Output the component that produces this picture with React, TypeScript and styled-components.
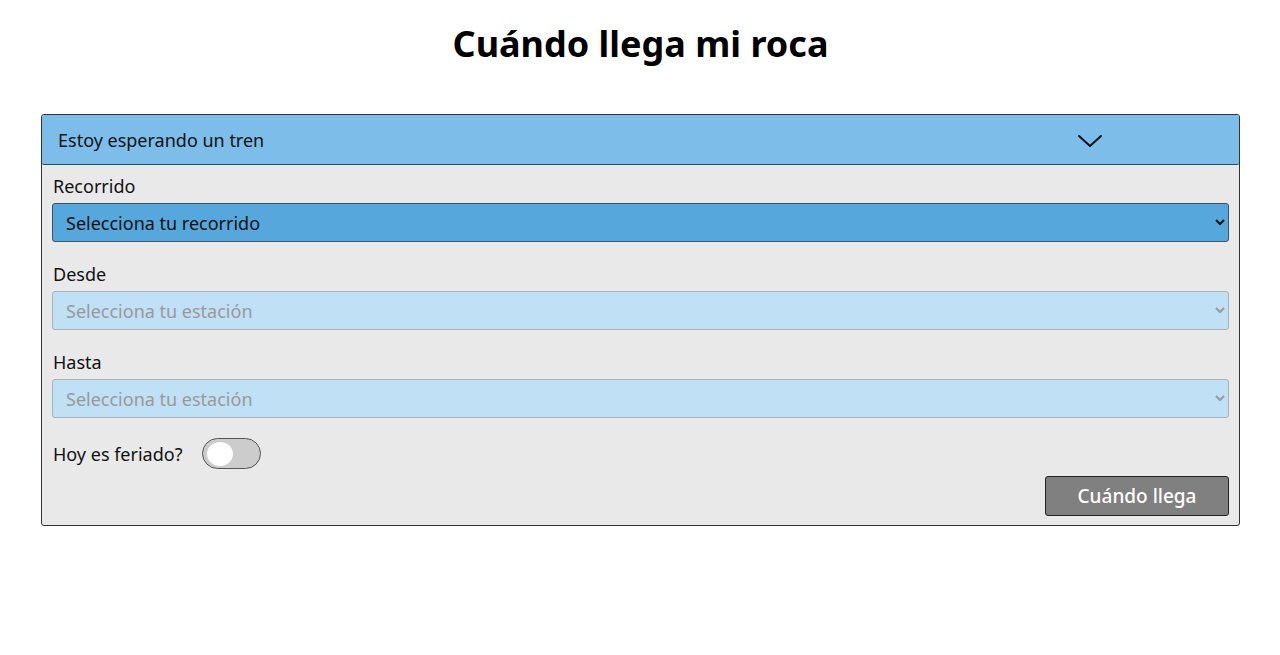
import { useState } from "react";
import styled, { createGlobalStyle } from "styled-components";

const GlobalStyle = createGlobalStyle`
  *, *::before, *::after { box-sizing: border-box; }
  body {
    margin: 0;
    background: #fff;
    color: #111;
    font-family: "Noto Sans", sans-serif;
    font-size: 18px;
    line-height: 24px;
  }
`;

const Page = styled.main`
  padding: 20px 40px 40px 41px;
`;

const Title = styled.h1`
  margin: 0 0 46px;
  color: #000;
  font-size: 36px;
  line-height: 48px;
  font-weight: 700;
  text-align: center;
`;

const Panel = styled.section`
  background: #e9e9e9;
  border: 1px solid #333;
  border-radius: 3px;
`;

const PanelHeader = styled.button`
  display: flex;
  align-items: center;
  justify-content: space-between;
  width: 100%;
  height: 50px;
  padding: 0 136px 0 16px;
  border: 0;
  border-bottom: 1px solid #2b4a60;
  border-radius: 2px;
  background: #7cbdea;
  color: #111;
  font: inherit;
  cursor: pointer;
`;

const Form = styled.form`
  display: flex;
  flex-direction: column;
  padding: 9px 10px;
`;

const Field = styled.div`
  display: flex;
  flex-direction: column;
  gap: 5px;
  margin-bottom: 20px;
`;

const Label = styled.label`
  padding-left: 1px;
`;

const Select = styled.select`
  width: 100%;
  height: 39px;
  padding: 0 1px 0 9px;
  border: 1px solid #3f5360;
  border-radius: 3px;
  background: #56a7dc;
  color: #111;
  font: inherit;

  &:disabled {
    border-color: #a9b3b9;
    background: #bfe0f5;
    color: #999;
    opacity: 1;
  }
`;

const SwitchRow = styled.div`
  display: flex;
  align-items: center;
  gap: 20px;
  margin-bottom: 7px;
`;

const Switch = styled.input`
  appearance: none;
  display: flex;
  align-items: center;
  width: 59px;
  height: 31px;
  margin: 0;
  padding: 0 4px;
  border: 1px solid #555;
  border-radius: 16px;
  background: #ccc;
  cursor: pointer;

  &::before {
    content: "";
    width: 26px;
    height: 24px;
    border-radius: 50%;
    background: #fff;
  }

  &:checked {
    justify-content: flex-end;
    background: #56a7dc;
  }
`;

const Submit = styled.button`
  align-self: flex-end;
  width: 184px;
  height: 40px;
  padding: 0;
  border: 1px solid #222;
  border-radius: 3px;
  background: #808080;
  color: #fff;
  font: inherit;
  font-size: 19px;
  font-weight: 500;
`;

const Chevron = () => (
  <svg width="26" height="16" viewBox="0 0 26 16" fill="none" aria-hidden="true">
    <path d="M2 4L13 14L24 4" stroke="#111" strokeWidth="2" strokeLinecap="round" strokeLinejoin="round" />
  </svg>
);

const fields = [
  { id: "recorrido", label: "Recorrido", placeholder: "Selecciona tu recorrido", disabled: false },
  { id: "desde", label: "Desde", placeholder: "Selecciona tu estación", disabled: true },
  { id: "hasta", label: "Hasta", placeholder: "Selecciona tu estación", disabled: true },
];

export default function App() {
  const [open, setOpen] = useState(true);
  return (
    <>
      <GlobalStyle />
      <Page>
        <Title>Cuándo llega mi roca</Title>
        <Panel>
          <PanelHeader type="button" aria-expanded={open} onClick={() => setOpen(!open)}>
            Estoy esperando un tren
            <Chevron />
          </PanelHeader>
          {open && (
            <Form onSubmit={(event) => event.preventDefault()}>
              {fields.map((field) => (
                <Field key={field.id}>
                  <Label htmlFor={field.id}>{field.label}</Label>
                  <Select id={field.id} disabled={field.disabled} defaultValue="">
                    <option value="">{field.placeholder}</option>
                  </Select>
                </Field>
              ))}
              <SwitchRow>
                <Label htmlFor="feriado">Hoy es feriado?</Label>
                <Switch id="feriado" type="checkbox" role="switch" />
              </SwitchRow>
              <Submit type="submit">Cuándo llega</Submit>
            </Form>
          )}
        </Panel>
      </Page>
    </>
  );
}
